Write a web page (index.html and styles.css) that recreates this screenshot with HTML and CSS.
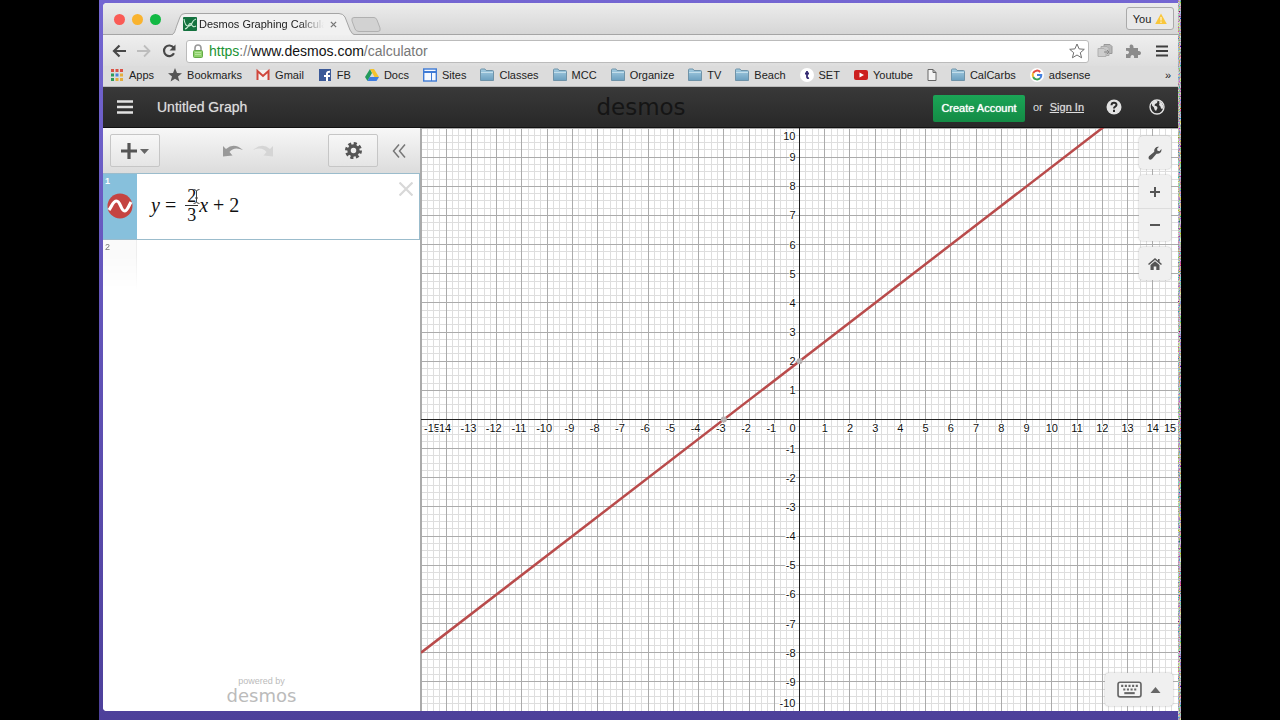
FILE: index.html
```html
<!DOCTYPE html>
<html lang="en">
<head>
<meta charset="utf-8">
<title>Desmos Graphing Calculator</title>
<link rel="stylesheet" href="styles.css">
</head>
<body>
<svg class="defs" aria-hidden="true">
  <linearGradient id="blue" x1="0" y1="0" x2="0" y2="1"><stop offset="0" stop-color="#a5cde2"/><stop offset="1" stop-color="#6b9fbf"/></linearGradient>
  <symbol id="folder" viewBox="0 0 14 14"><path d="M.5 12.500V2Q.5 1 1.500 1H5L6 2.500h6.500q1 0 1 1v9z" fill="url(#blue)" stroke="#6f93a8"/><path d="M1 4.500h12" stroke="#c3deeb"/></symbol>
</svg>
<div class="desktop">
  <div class="window">
    <div class="tabstrip">
      <div class="lights"><i class="light red"></i><i class="light amber"></i><i class="light green"></i></div>
      <div class="tab">
        <svg class="tab-shape" viewBox="0 0 186 22" preserveAspectRatio="none"><path d="M0 22C5 22 5 17 7 12L10 4Q11 .5 15 .5H169Q173 .5 175 4L180 17Q182 22 186 22" fill="#f1f1f1" stroke="#a5a5a5"/></svg>
        <svg class="favicon" viewBox="0 0 14 14"><rect width="14" height="14" rx="1" fill="#14723f"/><path d="M1 2q1 7 4 7t4-3 4-4M2 12q3-1 4-4.500 1-2 2.500 0Q10 11 13 9" fill="none" stroke="#c9ecd4" stroke-width="1.100"/></svg>
        <span class="tab-title">Desmos Graphing Calculator</span>
        <button class="tab-close" aria-label="Close tab"><svg viewBox="0 0 8 8"><path d="M1 1l6 6M7 1l-6 6" stroke="#777" stroke-width="1.500"/></svg></button>
      </div>
      <button class="new-tab" aria-label="New tab"><svg viewBox="0 0 30 15"><path d="M3 .5H23Q25 .5 26 3L29 11Q30 14.500 27 14.500H8Q5 14.500 4 12L1 4Q0 .5 3 .5z" fill="#d2d2d2" stroke="#b0b0b0"/></svg></button>
      <button class="profile">You <svg viewBox="0 0 12 12"><path d="M6 .5l5.800 10.500H.2z" fill="#f9c73c"/><path d="M6 4v3.500M6 8.500V10" stroke="#fff3c8" stroke-width="1.300"/></svg></button>
    </div>
    <div class="toolbar">
      <button aria-label="Back"><svg class="nav" viewBox="0 0 14 14"><path d="M14 7H2M7.500 1.500L2 7l5.500 5.500" fill="none" stroke="#484848" stroke-width="2.200"/></svg></button>
      <button aria-label="Forward"><svg class="nav" viewBox="0 0 14 14"><path d="M0 7h12M7 1.500L12.500 7 7 12.500" fill="none" stroke="#bdbdbd" stroke-width="1.800"/></svg></button>
      <button aria-label="Reload"><svg class="nav" viewBox="0 0 14 14"><path d="M11.500 3.500A5.300 5.300 0 1 0 12 9.300" fill="none" stroke="#484848" stroke-width="2.200"/><path d="M13.500.5v6h-6z" fill="#484848"/></svg></button>
      <div class="address">
        <svg class="lock" viewBox="0 0 12 14"><path d="M3 7V4a3 3 0 0 1 6 0v3" fill="none" stroke="#999" stroke-width="1.600"/><rect x="1.500" y="6.500" width="9" height="7" rx="1" fill="#8fd16b" stroke="#64aa48"/><path d="M3 8.500h6M3 10.500h6" stroke="#b4e59b"/></svg>
        <div class="url" role="textbox" aria-label="Address"><span class="scheme">https</span><span class="dim">://</span>www.desmos.com<span class="dim">/calculator</span></div>
        <button aria-label="Bookmark this page"><svg class="star" viewBox="0 0 16 16"><path d="M8 1l2.100 4.900 5.200.4-4 3.400 1.300 5.100L8 12l-4.600 2.800 1.300-5.100-4-3.400 5.200-.4z" fill="#fff" stroke="#707070"/></svg></button>
      </div>
      <button aria-label="Copy extension"><svg class="ext" viewBox="0 0 16 16"><path d="M7 1.500h6l2 2v7H7z" fill="#b8b8b8" stroke="#999"/><path d="M4 3.500h6l2 2v7H4z" fill="#c7c7c7" stroke="#aaa"/><path d="M1 5.500h6l2 2v6H1z" fill="#cdcdcd" stroke="#b0b0b0"/><path d="M7 9h5M10 7l2 2-2 2" stroke="#888" fill="none"/></svg></button>
      <button class="puzzle" aria-label="Extensions"><svg class="ext" viewBox="0 0 16 16"><path d="M1 5h4C3 1 9 0 8.500 5H13v3c4-1 4 5 0 4v3H9c1-4-4-4-3.500 0H1v-4c4 1 4-4 0-3z" fill="#8b8b8b"/></svg></button>
      <button class="menu-button" aria-label="Menu"><svg class="menu" viewBox="0 0 12 12"><path d="M0 1.500h12M0 6h12M0 10.500h12" stroke="#3f3f3f" stroke-width="2"/></svg></button>
    </div>
    <nav class="bookmarks">
      <a href="#"><svg viewBox="0 0 14 14"><path d="M1 2.500h12" stroke="#db5145" stroke-width="3" stroke-dasharray="3 1.500"/><path d="M1 7h3" stroke="#2f9c5b" stroke-width="3"/><path d="M5.500 7h3" stroke="#4a83db" stroke-width="3"/><path d="M10 7h3" stroke="#e4ae3c" stroke-width="3"/><path d="M1 11.500h3" stroke="#2f9c5b" stroke-width="3"/><path d="M5.500 11.500h7.500" stroke="#e4ae3c" stroke-width="3" stroke-dasharray="3 1.500"/></svg>Apps</a>
      <a href="#"><svg viewBox="0 0 14 14"><path d="M7 0l2 5 5 .3-4 3.300 1.400 5L7 10.800l-4.400 2.800 1.400-5L0 5.300 5 5z" fill="#555"/></svg>Bookmarks</a>
      <a href="#"><svg viewBox="0 0 14 14"><rect x="1" y="2" width="12" height="10" fill="#f4f1f0"/><path d="M1.500 12V3L7 8l5.500-5v9" fill="none" stroke="#d0473c" stroke-width="2"/></svg>Gmail</a>
      <a href="#"><svg viewBox="0 0 14 14"><rect x="1" y="1" width="12" height="12" fill="#3b5998"/><path d="M9 13V5.500Q9 3.500 12 3.700M6 8h6" fill="none" stroke="#fff" stroke-width="2"/></svg>FB</a>
      <a href="#"><svg viewBox="0 0 14 14"><path d="M5 1L0 9l2.500 4L7 5z" fill="#239b5c"/><path d="M5 1h4l5 8H9.500z" fill="#f3c32f"/><path d="M4.500 9H14l-2.500 4h-9z" fill="#3f7de0"/></svg>Docs</a>
      <a href="#"><svg viewBox="0 0 14 14"><rect x=".7" y="1" width="12.600" height="12" fill="#f5f9ff" stroke="#3f7bd5" stroke-width="1.400"/><path d="M1 4h12" stroke="#3f7bd5" stroke-width="2"/><path d="M8.500 4v9" stroke="#3f7bd5"/></svg>Sites</a>
      <a href="#"><svg><use href="#folder"/></svg>Classes</a>
      <a href="#"><svg><use href="#folder"/></svg>MCC</a>
      <a href="#"><svg><use href="#folder"/></svg>Organize</a>
      <a href="#"><svg><use href="#folder"/></svg>TV</a>
      <a href="#"><svg><use href="#folder"/></svg>Beach</a>
      <a href="#"><svg viewBox="0 0 14 14"><circle cx="7" cy="7" r="7" fill="#fff"/><path d="M7 3v6q0 1.500 2 1M5 5.500h4" fill="none" stroke="#342a72" stroke-width="1.800"/></svg>SET</a>
      <a href="#"><svg viewBox="0 0 14 14"><rect y="2" width="14" height="10" rx="2" fill="#cc201f"/><path d="M5.500 4.500v5L10 7z" fill="#fff"/></svg>Youtube</a>
      <a href="#" aria-label="Untitled page"><svg class="page" viewBox="0 0 10 14"><path d="M1 1.500h5l3 3v8H1zM6 1.500v3h3" fill="#f4f4f4" stroke="#666"/></svg></a>
      <a href="#"><svg><use href="#folder"/></svg>CalCarbs</a>
      <a href="#"><svg viewBox="0 0 14 14"><circle cx="7" cy="7" r="7" fill="#fff"/><g fill="none" stroke-width="2"><path d="M10.200 4A4.300 4.300 0 0 0 3.200 5" stroke="#e04a3f"/><path d="M3.200 5a4.300 4.300 0 0 0 0 4" stroke="#f0b92d"/><path d="M3.200 9a4.300 4.300 0 0 0 6.800 1.300" stroke="#3aa257"/><path d="M10 10.300A4.300 4.300 0 0 0 11.300 7H7" stroke="#437fe0"/></g></svg>adsense</a>
      <button class="more" aria-label="More bookmarks">»</button>
    </nav>
    <header class="app-header">
      <div class="header-side">
        <button aria-label="Open menu"><svg class="burger" viewBox="0 0 16 16"><path d="M0 2.500h16M0 8h16M0 13.500h16" stroke="#e2e2e2" stroke-width="2.400"/></svg></button>
        <h1>Untitled Graph</h1>
      </div>
      <div class="brand">desmos</div>
      <div class="header-side end">
        <button class="create">Create Account</button>
        <span class="or">or</span>
        <a class="signin" href="#">Sign In</a>
        <button class="help" aria-label="Help"><svg viewBox="0 0 16 16"><circle cx="8" cy="8" r="7.500" fill="#e2e2e2"/><path d="M5.500 6.200Q5.600 3.800 8 3.800t2.500 2q0 1.200-1.300 1.900T8 9.500M8 10.700V13" fill="none" stroke="#2b2b2b" stroke-width="2"/></svg></button>
        <button aria-label="Language"><svg viewBox="0 0 16 16"><circle cx="8" cy="8" r="7" fill="none" stroke="#e2e2e2" stroke-width="1.400"/><path d="M3 3.500L6 1.500l2.500.5L8 4 6 5 5.500 6.500 8 7.500l.5 1.500L7 12 5.500 10.500 5 8.500 3 6.500zM10 2l3 2 1.500 3.500-1 2.500-1.500-.5-.5-2L10 6l.5-1.500z" fill="#e2e2e2"/></svg></button>
      </div>
    </header>
    <main class="calculator">
      <section class="expressions">
        <div class="exp-bar">
          <button class="boxed" aria-label="Add item"><svg class="add" viewBox="0 0 28 16"><path d="M8 0v16M0 8h16" stroke="#555" stroke-width="3.200"/><path d="M19 6h9l-4.500 5z" fill="#666"/></svg></button>
          <div class="history">
            <button aria-label="Undo"><svg viewBox="0 0 20 12"><path d="M0 1l3 3Q11-3 20 5 11 1 6.500 7l3 3.500L0 11.500z" fill="#999"/></svg></button>
            <button aria-label="Redo"><svg viewBox="0 0 20 12"><path d="M20 1l-3 3Q9-3 0 5 9 1 13.500 7l-3 3.500 9.500 1z" fill="#d5d5d5"/></svg></button>
          </div>
          <button class="boxed" aria-label="Edit list"><svg class="gear" viewBox="0 0 16 16"><circle cx="8" cy="8" r="6.500" fill="none" stroke="#555" stroke-width="3" stroke-dasharray="2.850 2.255"/><circle cx="8" cy="8" r="4.200" fill="none" stroke="#555" stroke-width="3.200"/></svg></button>
          <button class="collapse" aria-label="Hide list"><svg viewBox="0 0 14 14"><path d="M7 .5L1.500 7 7 13.500M13 .5L7.500 7l5.500 6.500" fill="none" stroke="#777" stroke-width="1.500"/></svg></button>
        </div>
        <div class="exp selected">
          <div class="exp-tab"><span class="num">1</span>
            <button aria-label="Hide curve"><svg viewBox="0 0 26 26"><circle cx="13" cy="13" r="12.500" fill="#c54442"/><path d="M2 17C5 13 6 8 9.500 8c4 0 4.500 10 8 10 3 0 4-5 6.500-9" fill="none" stroke="#fff" stroke-width="3.200"/></svg></button></div>
          <div class="formula" role="math" aria-label="y = 2/3 x + 2"><i>y</i><span class="op">=</span><span class="fraction"><span class="numerator">2</span><span>3</span></span><i>x</i><span class="plus">+</span><span>2</span>
            <svg class="ibeam" viewBox="0 0 7 15"><path d="M.5.500q3 0 3 2 0-2 3-2M3.500 2v11M.5 14.500q3 0 3-2 0 2 3 2M2 9h3" fill="none" stroke="#444"/></svg></div>
          <button class="delete" aria-label="Delete expression"><svg viewBox="0 0 14 14"><path d="M.5.500l13 13M13.500.500L.5 13.500" stroke="#d8d8d8" stroke-width="2.200"/></svg></button>
        </div>
        <div class="exp next"><div class="exp-tab"><span class="num">2</span></div></div>
        <footer class="powered"><span>powered by</span><strong>desmos</strong></footer>
      </section>
      <section class="graph">
        <svg class="plot" id="plot" role="img" aria-label="Graph of y = 2/3 x + 2"></svg>
        <div class="graph-tools">
          <button aria-label="Graph settings"><svg viewBox="0 0 14 14"><path d="M1.200 10L6.300 5.800C5.500 2.500 8.500 0 11 .8L9 2.800l.5 2 2 .4L13.400 3C14 6 11.500 8.300 8.500 7.700L4 12.900Q2 14.500 1 13T1.200 10z" fill="#555"/></svg></button>
          <div class="zoom">
            <button aria-label="Zoom in"><svg viewBox="0 0 14 14"><path d="M7 2v10M2 7h10" stroke="#555" stroke-width="2"/></svg></button>
            <button aria-label="Zoom out"><svg viewBox="0 0 14 14"><path d="M2 7h10" stroke="#555" stroke-width="2"/></svg></button>
          </div>
          <button aria-label="Default view"><svg viewBox="0 0 14 14"><path d="M.5 7.500L7 2l6.500 5.500M10.800 2v3" fill="none" stroke="#555" stroke-width="1.600"/><path d="M2.500 8L7 4.300 11.500 8v5H8.300V9.500H5.700V13H2.500z" fill="#555"/></svg></button>
        </div>
        <button class="keypad" aria-label="Show keypad"><svg class="keys" viewBox="0 0 24 16"><rect x="1" y="1" width="22" height="14" rx="2" fill="#f4f4f4" stroke="#666" stroke-width="1.600"/><path d="M4 4.500h17M6 8h13" stroke="#666" stroke-width="2" stroke-dasharray="2 1.500"/><path d="M7 11.500h10" stroke="#666" stroke-width="2"/></svg><svg class="up" viewBox="0 0 10 6"><path d="M0 6l5-6 5 6z" fill="#666"/></svg></button>
      </section>
    </main>
  </div>
  <svg class="static" aria-hidden="true"><filter id="noise" x="0" y="0" width="1" height="1"><feTurbulence type="fractalNoise" baseFrequency=".8" numOctaves="2"/><feColorMatrix values="1.500 0 0 0 -.3 0 1.500 0 0 -.3 0 0 1.500 0 -.3 0 0 0 0 1"/></filter><rect width="100%" height="100%" filter="url(#noise)"/></svg>
</div>
<script src="script.js"></script>
</body>
</html>
```
FILE: styles.css
```css
* { box-sizing: border-box; }
body { margin: 0; background: #000; font-family: "Liberation Sans", Arial, sans-serif; font-size: 11px; color: #222; }
button { border: 0; padding: 0; margin: 0; background: none; font: inherit; color: inherit; display: flex; align-items: center; justify-content: center; }
a { color: inherit; text-decoration: none; }
svg { display: block; flex: none; }
.defs { position: absolute; width: 0; height: 0; }

.desktop { display: flex; min-height: 100vh; margin: 0 99px; padding-left: 4px; background: linear-gradient(#7466d2, #5647a6 80%, #4d409a); }
.window { flex: 1; min-width: 0; display: flex; flex-direction: column; margin: 3px 0 9px; background: #fff; border-radius: 4px 0 0 4px; overflow: hidden; }
.static { width: 3px; align-self: stretch; height: auto; }

.tabstrip { display: flex; align-items: flex-end; height: 32px; padding: 0 4px 0 11px; background: linear-gradient(#ececec, #d6d6d6); border-bottom: 1px solid #a5a5a5; }
.lights { display: flex; gap: 7px; padding-bottom: 9px; }
.light { width: 11px; height: 11px; border-radius: 50%; }
.red { background: #fa5b56; }
.amber { background: #f9b32f; }
.green { background: #12b944; }
.tab { position: relative; display: flex; align-items: center; width: 186px; height: 22px; margin: 0 0 -1px 9px; padding: 0 16px 0 13px; }
.tab-shape { position: absolute; inset: 0; width: 100%; height: 100%; }
.favicon { position: relative; width: 14px; height: 14px; }
.tab-title { position: relative; flex: 1; margin-left: 2px; overflow: hidden; white-space: nowrap; -webkit-mask-image: linear-gradient(90deg, #000 80%, transparent); mask-image: linear-gradient(90deg, #000 80%, transparent); }
.tab-close { position: relative; margin-left: 6px; margin-right: 3px; }
.tab-close svg { width: 7px; height: 7px; }
.new-tab { padding-bottom: 2px; margin-left: -5px; }
.new-tab svg { width: 30px; height: 15px; }
.profile { margin: 0 0 4px auto; width: 48px; height: 23px; gap: 4px; border: 1px solid #aaa; border-radius: 3px; background: #e9e9e9; }
.profile svg { width: 12px; height: 12px; }

.toolbar { display: flex; align-items: center; gap: 11px; height: 31px; padding: 1px 10px 0 9px; background: linear-gradient(#efefef, #dedede); }
.nav { width: 14px; height: 14px; }
.address { flex: 1; display: flex; align-items: center; height: 23px; padding: 0 3px 0 5px; margin-left: -1px; margin-right: -3px; background: #fff; border: 1px solid #bbb; border-radius: 3px; }
.lock { width: 12px; height: 14px; }
.url { flex: 1; margin-left: 5px; font-size: 14px; line-height: 20px; color: #111; }
.scheme { color: #1b9334; }
.dim { color: #777; }
.star, .ext { width: 16px; height: 16px; }
.puzzle { margin-left: 1px; }
.menu-button { margin-left: 4px; }
.menu { width: 12px; height: 12px; }

.bookmarks { display: flex; align-items: center; gap: 14px; height: 21px; padding: 0 7px 2px; background: #dcdcdc; border-bottom: 1px solid #bbb; white-space: nowrap; }
.bookmarks a { display: flex; align-items: center; gap: 5px; }
.bookmarks svg { width: 14px; height: 14px; }
.bookmarks .page { width: 10px; }
.more { margin-left: auto; }

.app-header { display: flex; align-items: center; height: 41px; background: linear-gradient(#393939, #282828); border-bottom: 1px solid #111; color: #ddd; }
.header-side { flex: 1; display: flex; align-items: center; padding-left: 14px; }
.burger { width: 16px; height: 16px; }
h1 { margin: 0 0 0 24px; font-size: 14px; font-weight: normal; text-shadow: 0 0 1px #999; }
.brand { font: 23px/40px "DejaVu Sans", sans-serif; color: #151515; }
.end { justify-content: flex-end; padding: 0 13px 0 0; }
.create { height: 27px; width: 92px; margin: 2px 8px 0 0; border-radius: 2px; background: linear-gradient(#1ba556, #138b45); color: #fff; white-space: nowrap; text-shadow: 0 0 1px #fff; }
.or { margin-right: 7px; }
.signin { margin-right: 22px; text-decoration: underline; white-space: nowrap; text-shadow: 0 0 1px #999; }
.end svg { width: 16px; height: 16px; }
.help { margin-right: 27px; }

.calculator { flex: 1; display: flex; min-height: 400px; }
.expressions { display: flex; flex-direction: column; width: 318px; border-right: 1px solid #aaa; background: #fff; }
.exp-bar { display: flex; align-items: center; height: 45px; padding: 0 14px 0 7px; background: linear-gradient(#f7f7f7, #dcdcdc); }
.boxed { width: 50px; height: 33px; border: 1px solid #c6c6c6; border-radius: 2px; background: linear-gradient(#f7f7f7, #e5e5e5); }
.add { width: 28px; height: 16px; }
.gear { width: 17px; height: 17px; }
.history { flex: 1; display: flex; justify-content: center; gap: 10px; padding-left: 8px; }
.history svg { width: 20px; height: 12px; }
.collapse { margin-left: 14px; }
.collapse svg { width: 14px; height: 14px; }
.exp { display: flex; }
.selected { height: 67px; border: 1px solid #9bbccc; border-left: 0; }
.exp-tab { display: flex; flex-direction: column; width: 34px; padding: 2px 2px 0; }
.num { font-size: 9px; line-height: 10px; color: #777; }
.selected .exp-tab { background: #87c0dc; }
.selected .num { color: #fff; font-weight: bold; }
.exp-tab button { margin-top: 7px; }
.exp-tab svg { width: 26px; height: 26px; }
.formula { position: relative; flex: 1; display: flex; align-items: center; padding: 0 0 3px 14px; font: 20px/20px "Liberation Serif", "Times New Roman", serif; color: #111; }
.op { margin: 0 9px 0 5px; }
.plus { margin: 0 5px; }
.fraction { display: flex; flex-direction: column; align-items: center; width: 13px; margin-right: 1px; font-size: 18px; line-height: 18px; }
.numerator { width: 100%; border-bottom: 1px solid #333; text-align: center; }
.ibeam { position: absolute; left: 56px; top: 15px; width: 7px; height: 15px; }
.delete { align-self: flex-start; margin: 8px 6px 0 0; }
.delete svg { width: 14px; height: 14px; }
.next .exp-tab { height: 50px; border-right: 1px solid #eee; background: #fafafa; -webkit-mask-image: linear-gradient(#000 30%, transparent); mask-image: linear-gradient(#000 30%, transparent); }
.powered { display: flex; flex-direction: column; align-items: center; margin-top: auto; padding-bottom: 5px; color: #bbb; font-size: 9px; line-height: 10px; }
.powered strong { font: 18px/21px "DejaVu Sans", sans-serif; margin-top: -1px; }

.graph { position: relative; flex: 1; min-width: 0; overflow: hidden; }
.plot { position: absolute; inset: 0; width: 100%; height: 100%; font-size: 11px; }
.minor { stroke: #dedede; }
.major { stroke: #ababab; }
.axis { stroke: #222; }
.minor, .major, .axis { fill: none; shape-rendering: crispEdges; }
.curve { stroke: #b94b4b; stroke-width: 2.500; }
.point { fill: #b5b0b0; }
.label { fill: #111; stroke: #fff; stroke-width: 2; paint-order: stroke; }
.graph-tools { position: absolute; top: 8px; right: 7px; display: flex; flex-direction: column; gap: 6px; }
.graph-tools button { width: 32px; height: 33px; background: #f0f0f0; }
.graph-tools > button, .zoom, .keypad { border-radius: 4px; background: #f0f0f0; box-shadow: 0 0 2px #aaa; }
.zoom { overflow: hidden; }
.zoom button + button { border-top: 1px solid #ddd; }
.graph-tools svg { width: 14px; height: 14px; }
.keypad { position: absolute; right: 5px; bottom: 5px; width: 68px; height: 33px; gap: 8px; }
.keys { width: 25px; height: 17px; }
.up { width: 11px; height: 6px; }
```
FILE: script.js
```js
const plot = document.getElementById('plot');
const NS = 'http://www.w3.org/2000/svg';
const XMAX = 15, YMAX = 10, STEPS = 4;
const MINUS_WIDTH = 3;

function add(tag, cls, attrs, text) {
  const el = document.createElementNS(NS, tag);
  el.setAttribute('class', cls);
  for (const key in attrs) el.setAttribute(key, attrs[key]);
  if (text !== undefined) el.textContent = text;
  plot.appendChild(el);
}

function draw() {
  const { width: w, height: h } = plot.getBoundingClientRect();
  const X = x => w / 2 + x * w / (2 * XMAX);
  const Y = y => h / 2 - y * h / (2 * YMAX);
  const snap = v => Math.floor(v) + 0.5;
  plot.replaceChildren();

  let minor = '', major = '';
  for (let i = -XMAX * STEPS; i <= XMAX * STEPS; i++) {
    const d = `M${snap(X(i / STEPS))} 0V${h}`;
    if (i % STEPS) minor += d; else major += d;
  }
  for (let i = -YMAX * STEPS; i <= YMAX * STEPS; i++) {
    const d = `M0 ${snap(Y(i / STEPS))}H${w}`;
    if (i % STEPS) minor += d; else major += d;
  }
  add('path', 'minor', { d: minor });
  add('path', 'major', { d: major });
  add('path', 'axis', { d: `M${snap(X(0))} 0V${h}M0 ${snap(Y(0))}H${w}` });

  for (let x = -XMAX; x <= XMAX; x++) {
    if (x === 0) continue;
    const centre = x < 0 ? X(x) - MINUS_WIDTH : X(x);
    const px = Math.min(Math.max(centre, 11), w - 8);
    add('text', 'label', { x: px, y: Y(0) + 12, 'text-anchor': 'middle' }, x);
  }
  for (let y = -YMAX; y <= YMAX; y++) {
    const py = y === 0 ? Y(0) + 12 : Math.min(Math.max(Y(y) + 4, 12), h - 4);
    add('text', 'label', { x: X(0) - 4, y: py, 'text-anchor': 'end' }, y);
  }

  const f = x => 2 / 3 * x + 2;
  add('line', 'curve', { x1: X(-XMAX), y1: Y(f(-XMAX)), x2: X(XMAX), y2: Y(f(XMAX)) });
  add('circle', 'point', { cx: X(-3), cy: Y(0), r: 3 });
  add('circle', 'point', { cx: X(0), cy: Y(2), r: 3 });
}

draw();
window.addEventListener('resize', draw);
```
